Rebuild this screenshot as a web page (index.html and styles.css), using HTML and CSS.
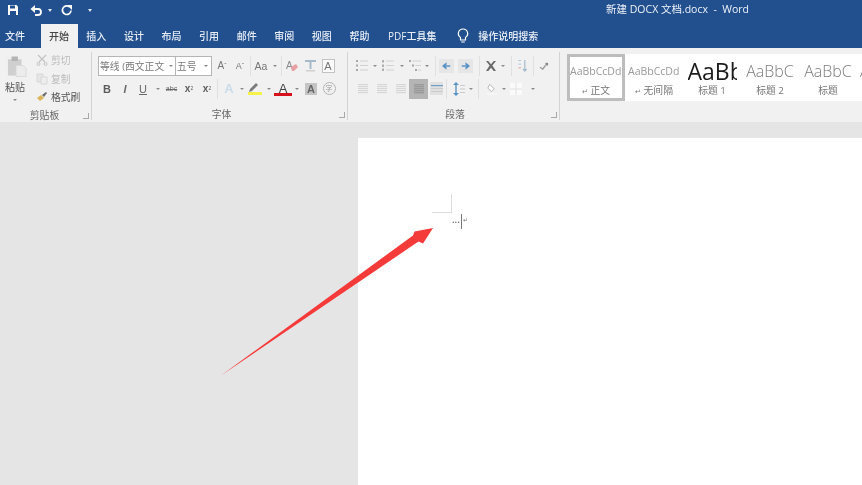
FILE: index.html
```html
<!DOCTYPE html>
<html>
<head>
  <meta charset="utf-8">
  <title>新建 DOCX 文档.docx - Word</title>
  <link rel="stylesheet" href="styles.css">
</head>
<body>
<div class="window">
  <div class="titlebar">
    <div class="qat">
      <svg class="qat-save" width="12" height="12" viewBox="0 0 12 12"><path fill="#fff" d="M1 1h8.500L11 2.500V11H1z"/><path fill="#22508f" d="M3 1.500h5v3H3zM3 7h6v4H3z"/></svg>
      <svg class="qat-undo" width="13" height="12" viewBox="0 0 13 12"><path fill="none" stroke="#fff" stroke-width="1.800" d="M3 5h5a3 3 0 0 1 0 6H5"/><path fill="#fff" d="M0.500 5L5 1v8z"/></svg>
      <span class="qat-caret"></span>
      <svg class="qat-redo" width="13" height="12" viewBox="0 0 13 12"><path fill="none" stroke="#fff" stroke-width="1.700" d="M9.800 3.200A4.300 4.300 0 1 0 11 6.500"/><path fill="#fff" d="M7 1h5v5z"/></svg>
      <span class="qat-caret qat-more"></span>
    </div>
    <div class="doc-title">新建 DOCX 文档.docx &nbsp;-&nbsp; Word</div>
  </div>

  <div class="tabs">
    <span class="tab tab-file">文件</span>
    <span class="tab tab-active">开始</span>
    <span class="tab">插入</span>
    <span class="tab">设计</span>
    <span class="tab">布局</span>
    <span class="tab">引用</span>
    <span class="tab">邮件</span>
    <span class="tab">审阅</span>
    <span class="tab">视图</span>
    <span class="tab">帮助</span>
    <span class="tab tab-pdf">PDF工具集</span>
    <svg class="bulb" width="12" height="16" viewBox="0 0 12 16"><path fill="none" stroke="#fff" stroke-width="1.200" d="M6 1a4.600 4.600 0 0 0-2.500 8.500V12h5V9.500A4.600 4.600 0 0 0 6 1zM4.200 14h3.600"/></svg>
    <span class="tab tab-search">操作说明搜索</span>
  </div>

  <div class="ribbon">
    <div class="group group-clip">
      <div class="clip-body">
        <div class="paste">
          <svg width="20" height="23" viewBox="0 0 22 24"><path fill="#cfcfcf" d="M1 4h15v18H1z"/><path fill="#b4b4b4" d="M5 1h7v5H5z"/><path fill="#ececec" stroke="#dadada" d="M10 11h8l3 3v9H10z"/></svg>
          <span class="paste-label">粘贴</span>
          <span class="caret"></span>
        </div>
        <div class="clip-list">
          <div class="clip-row muted">
            <svg width="12" height="12" viewBox="0 0 12 12"><path fill="none" stroke="#c2c2c2" stroke-width="1.200" d="M2 1l7 7M10 1L3 8"/><circle cx="2.500" cy="10" r="1.500" fill="none" stroke="#c2c2c2"/><circle cx="9.500" cy="10" r="1.500" fill="none" stroke="#c2c2c2"/></svg>
            <span>剪切</span>
          </div>
          <div class="clip-row muted">
            <svg width="12" height="12" viewBox="0 0 12 12"><path fill="#e6e6e6" stroke="#d8d8d8" d="M1 1h6v8H1z"/><path fill="#eeeeee" stroke="#d8d8d8" d="M5 4h6v7H5z"/></svg>
            <span>复制</span>
          </div>
          <div class="clip-row">
            <svg width="12" height="12" viewBox="0 0 12 12"><path fill="#dcb55a" d="M1 7l4-3 3 3-4 3z"/><path fill="#6c6c6c" d="M6 4l4-3 1 1-3 4z"/></svg>
            <span>格式刷</span>
          </div>
        </div>
      </div>
      <div class="group-foot"><span></span><span class="group-label">剪贴板</span><span class="launcher"></span></div>
    </div>

    <div class="group group-font">
      <div class="row">
        <span class="combo combo-font">等线 (西文正文<span class="caret"></span></span>
        <span class="combo combo-size">五号<span class="caret"></span></span>
        <span class="b18 glyph">A<sup>ˆ</sup></span>
        <span class="b18 glyph glyph-sm">A<sup>ˇ</sup></span>
        <span class="sep"></span>
        <span class="b18 glyph glyph-aa">Aa</span><span class="w10"><span class="caret"></span></span>
        <span class="sep"></span>
        <span class="b18"><svg width="14" height="14" viewBox="0 0 14 14"><text class="svg-a" x="1" y="10" fill="#888">A</text><path fill="#e8a0a4" d="M6 8l5-3 2 3-4 4H7z"/></svg></span>
        <span class="b18"><svg width="13" height="14" viewBox="0 0 13 14"><path fill="#a5bacb" d="M1 1h11v2H1zM5.500 3h2v7h-2z"/><path fill="#cfcfcf" d="M2 11h9v1.500H2z"/></svg></span>
        <span class="b18"><span class="boxed-a">A</span></span>
      </div>
      <div class="row">
        <span class="b18 fmt fmt-b">B</span>
        <span class="b18 fmt fmt-i">I</span>
        <span class="b18 fmt fmt-u">U</span>
        <span class="w11"><span class="caret"></span></span>
        <span class="w17 fmt-abc">abc</span>
        <span class="b18 fmt fmt-x">x<sub>2</sub></span>
        <span class="b18 fmt fmt-x">x<sup>2</sup></span>
        <span class="sep sep-wide"></span>
        <span class="b18 fx-a">A</span>
        <span class="w8"><span class="caret"></span></span>
        <span class="b18"><svg width="16" height="15" viewBox="0 0 16 15"><path fill="#7c7c7c" d="M3 8l6-6 2 2-6 6-3 1z"/><path fill="#f5f24a" d="M1 11h14v3H1z"/></svg></span>
        <span class="w10"><span class="caret"></span></span>
        <span class="b18 color-a">A</span>
        <span class="w10"><span class="caret"></span></span>
        <span class="b18"><span class="shade-a">A</span></span>
        <span class="b18"><span class="circle-a">字</span></span>
      </div>
      <div class="group-foot"><span></span><span class="group-label">字体</span><span class="launcher"></span></div>
    </div>

    <div class="group group-para">
      <div class="row">
        <span class="b18"><svg width="12" height="11" viewBox="0 0 12 11"><path fill="#a8a8a8" d="M0 0h2v2H0zM0 4.500h2v2H0zM0 9h2v2H0z"/><path fill="#d2d2d2" d="M4 .5h8v1H4zM4 5h8v1H4zM4 9.500h8v1H4z"/></svg></span>
        <span class="w8"><span class="caret"></span></span>
        <span class="b18"><svg width="12" height="11" viewBox="0 0 12 11"><path fill="#b0b0b0" d="M0 0h2v2.500H0zM0 4.500h2V7H0zM0 8.500h2V11H0z"/><path fill="#d2d2d2" d="M4 .5h8v1H4zM4 5h8v1H4zM4 9.500h8v1H4z"/></svg></span>
        <span class="w9"><span class="caret"></span></span>
        <span class="b18"><svg width="12" height="11" viewBox="0 0 12 11"><path fill="#a8a8a8" d="M0 0h2v2H0zM3 4.500h2v2H3zM6 9h2v2H6z"/><path fill="#d2d2d2" d="M3.500 .5H12v1H3.500zM6.500 5H12v1H6.500zM9 9.500h3v1H9z"/></svg></span>
        <span class="w6"><span class="caret"></span></span>
        <span class="sep sep-para1"></span>
        <span class="indent"><svg width="9" height="8" viewBox="0 0 12 10"><path fill="#5b93c6" d="M6 0v10L0 5z"/><path fill="#5b93c6" d="M6 4h5v2H6z"/></svg></span>
        <span class="indent"><svg width="9" height="8" viewBox="0 0 12 10"><path fill="#5b93c6" d="M6 0v10l6-5z"/><path fill="#5b93c6" d="M1 4h5v2H1z"/></svg></span>
        <span class="sep sep-para2"></span>
        <span class="w14"><svg width="12" height="10" viewBox="0 0 13 11"><path fill="#6a6a6a" d="M1 0h2.500l3 3.500L9.500 0H12L8 5l4 6H9.500l-3-3.500-3 3.500H1l4-6z"/></svg></span>
        <span class="w9"><span class="caret"></span></span>
        <span class="sep sep-para3"></span>
        <span class="w12"><svg width="11" height="14" viewBox="0 0 11 15"><path fill="#9dbcd6" d="M1 1h3v1H1zM1 5h3v1H1z"/><path fill="#d6a0a0" d="M1 9h3v1H1z"/><path fill="none" stroke="#a0b6c9" stroke-width="1.200" d="M8 1v12M6 10.500L8 13l2-2.500"/></svg></span>
        <span class="sep sep-para4"></span>
        <span class="w12"><svg width="11" height="9" viewBox="0 0 12 10"><path fill="none" stroke="#9a9a9a" stroke-width="1.500" d="M1 7l3 2 3-4"/><path fill="#8a8a8a" d="M7 2h3v3H7z"/></svg></span>
      </div>
      <div class="row">
        <span class="w18b"><span class="align"></span></span>
        <span class="w18b"><span class="align"></span></span>
        <span class="w18b"><span class="align"></span></span>
        <span class="align-on"><span class="align align-dark"></span></span>
        <span class="align-dist"><svg width="12" height="12" viewBox="0 0 12 12"><path fill="#6e9cc4" d="M0 2h12v1.200H0z"/><path fill="#cbcbcb" d="M0 5h12v1H0zM0 8h12v1H0z"/></svg></span>
        <span class="sep sep-para5"></span>
        <span class="w14"><svg width="12" height="14" viewBox="0 0 12 14"><path fill="#5b93c6" d="M3 0l3 3H0zM3 14l3-3H0zM2.300 3h1.400v8H2.300z"/><path fill="#cacaca" d="M7 3h5v1H7zM7 6.500h5v1H7zM7 10h5v1H7z"/></svg></span>
        <span class="w9"><span class="caret"></span></span>
        <span class="sep sep-para6"></span>
        <span class="w14"><svg width="12" height="13" viewBox="0 0 13 13"><path fill="#fff" stroke="#b0b0b0" d="M4 2l5 5-3 3-4-4z"/><path fill="#f6f6f6" d="M0 11h12v2H0z"/></svg></span>
        <span class="w10"><span class="caret"></span></span>
        <span class="w14"><svg width="12" height="12" viewBox="0 0 12 12"><path fill="#fafafa" d="M0 0h12v12H0z"/><path fill="none" stroke="#e2e2e2" d="M6 0v12M0 6h12"/></svg></span>
        <span class="w18b"><span class="caret"></span></span>
      </div>
      <div class="group-foot"><span></span><span class="group-label">段落</span><span class="launcher"></span></div>
    </div>

    <div class="gallery">
      <div class="style style-on"><span class="sample sample-sm">AaBbCcDd</span><span class="style-name"><i>↵</i> 正文</span></div>
      <div class="style"><span class="sample sample-sm">AaBbCcDd</span><span class="style-name"><i>↵</i> 无间隔</span></div>
      <div class="style"><span class="sample sample-h1">AaBb</span><span class="style-name">标题 1</span></div>
      <div class="style"><span class="sample sample-h2">AaBbC</span><span class="style-name">标题 2</span></div>
      <div class="style"><span class="sample sample-h2">AaBbC</span><span class="style-name">标题</span></div>
      <div class="style style-cut"><span class="sample sample-h2">AaBbC</span></div>
    </div>
  </div>

  <div class="workspace">
    <div class="page">
      <div class="crop-mark"></div>
      <div class="text-line">
        <span class="dots">···</span>
        <span class="cursor"></span>
        <span class="para-mark">↵</span>
      </div>
    </div>
  </div>

  <svg class="arrow" width="862" height="485" viewBox="0 0 862 485">
    <path fill="#f53a3a" d="M221 375.500L413 235.500 414.500 231.500 433 228 423 243.500 418.500 241.500z"/>
  </svg>
</div>
</body>
</html>
```

FILE: styles.css
```css
* {
  box-sizing: border-box;
}
html, body {
  margin: 0;
  padding: 0;
}
.window {
  position: relative;
  width: 862px;
  height: 485px;
  overflow: hidden;
  display: flex;
  flex-direction: column;
  background: #e5e5e5;
  color: #555;
  font-family: "Open Sans", "Noto Sans CJK SC", sans-serif;
  font-size: 10px;
  filter: blur(0.45px);
}

/* title bar */
.titlebar {
  height: 24px;
  flex: none;
  display: flex;
  background: #22508f;
  color: #fff;
}
.qat {
  width: 606px;
  display: flex;
  align-items: center;
  padding: 0 0 4px 7px;
}
.qat-undo {
  margin-left: 11px;
}
.qat-caret {
  width: 0;
  height: 0;
  margin-left: 5px;
  border: 2px solid transparent;
  border-top: 3px solid #dfe7f2;
  border-bottom: 0;
}
.qat-redo {
  margin-left: 8px;
}
.qat-more {
  margin-left: 15px;
}
.doc-title {
  padding-top: 2px;
  font-size: 10.500px;
  line-height: 14px;
  white-space: nowrap;
  color: #eef2f8;
}

/* tabs */
.tabs {
  height: 24px;
  flex: none;
  display: flex;
  align-items: stretch;
  background: #22508f;
  color: #e9eef6;
}
.tab {
  width: 37.600px;
  line-height: 25px;
  text-align: center;
  font-size: 10px;
  font-weight: 500;
}
.tab-file {
  width: 30px;
  margin-right: 10.500px;
}
.tab-active {
  width: 37px;
  background: #f1f1f1;
  color: #444;
}
.tab-pdf {
  width: 68px;
}
.bulb {
  margin: 4px 0 0 11px;
}
.tab-search {
  width: 70px;
  margin-left: 4px;
}

/* ribbon */
.ribbon {
  height: 74px;
  flex: none;
  display: flex;
  background: #f1f1f1;
}
.group {
  display: flex;
  flex-direction: column;
  padding-top: 6px;
  position: relative;
}
.group::after {
  content: "";
  position: absolute;
  right: 0;
  top: 4px;
  bottom: 2px;
  width: 1px;
  background: #d3d3d3;
}
.group-clip {
  width: 92px;
}
.group-font {
  width: 256px;
  padding-left: 6px;
}
.group-para {
  width: 212px;
  padding-left: 5px;
}
.group-foot {
  height: 14px;
  margin-top: 8px;
  padding-right: 3px;
  display: grid;
  grid-template-columns: 1fr auto 1fr;
  align-items: center;
}
.group-clip .group-foot {
  margin-top: 2px;
}
.group-label {
  font-size: 9.800px;
  line-height: 14px;
  color: #666;
}
.launcher {
  justify-self: end;
  width: 6px;
  height: 6px;
  border-left: 1px solid #a8a8a8;
  border-bottom: 1px solid #a8a8a8;
  transform: scaleX(-1);
}

.row {
  height: 24px;
  display: flex;
  align-items: center;
}
.row > span {
  flex: none;
  display: flex;
  align-items: center;
  justify-content: center;
  height: 20px;
}
.b18 { width: 18px; }
.w6 { width: 6px; }
.w8 { width: 8px; }
.w9 { width: 9px; }
.w10 { width: 10px; }
.w11 { width: 11px; }
.w12 { width: 12px; }
.w14 { width: 14px; }
.w17 { width: 17px; }
.row > .w18b { width: 19px; }

.caret {
  display: inline-block;
  width: 0;
  height: 0;
  border: 2px solid transparent;
  border-top: 2.500px solid #8a8a8a;
  border-bottom: 0;
}
.row > .sep {
  width: 1px;
  height: 20px;
  margin: 0 1px;
  background: #e0e0e0;
}
.row > .sep-wide { margin: 0 2px 0 1px; }
.row > .sep-para1 { margin: 0 3px 0 5px; }
.row > .sep-para2 { margin: 0 4px 0 2px; }
.row > .sep-para3 { margin: 0 4px 0 4px; }
.row > .sep-para4 { margin: 0 4px 0 5px; }
.row > .sep-para5 { margin: 0 5px 0 3px; }
.row > .sep-para6 { margin: 0 6px 0 3px; }

/* clipboard */
.clip-body {
  height: 54px;
  display: flex;
}
.paste {
  width: 30px;
  margin-right: 6px;
  padding-top: 1px;
  display: flex;
  flex-direction: column;
  align-items: center;
}
.paste svg {
  margin-left: 4px;
}
.paste-label {
  margin-top: 2px;
  font-size: 10px;
  line-height: 14px;
  color: #555;
}
.paste .caret {
  margin-top: 5px;
}
.clip-list {
  margin-top: -3px;
}
.clip-row {
  height: 18.500px;
  display: flex;
  align-items: center;
  gap: 3px;
  font-size: 9.800px;
  color: #555;
}
.clip-row svg {
  flex: none;
}
.clip-row.muted {
  color: #bcbcbc;
}

/* font */
.combo {
  background: #fff;
  border: 1px solid #b5b5b5;
  font-size: 9.800px;
  color: #7a7a7a;
  white-space: nowrap;
  overflow: hidden;
}
.row > .combo-font {
  width: 78px;
  justify-content: space-between;
  padding: 0 2px 0 1px;
}
.row > .combo-size {
  width: 37px;
  margin-left: -1px;
  margin-right: 1px;
  justify-content: space-between;
  padding: 0 3px 0 1px;
}
.combo .caret {
  flex: none;
}
.glyph {
  font-family: "Liberation Sans", sans-serif;
  font-size: 10px;
  color: #777;
  align-items: flex-start;
}
.glyph-sm {
  font-size: 9px;
}
.glyph sup {
  font-size: 7px;
  line-height: 8px;
  vertical-align: top;
}
.glyph-aa {
  font-size: 10.500px;
}
.boxed-a {
  width: 13px;
  height: 14px;
  border: 1px solid #c2c2c2;
  background: #fafafa;
  font-family: "Liberation Sans", sans-serif;
  font-size: 11px;
  line-height: 12px;
  text-align: center;
  color: #777;
}
.svg-a {
  font-family: "Liberation Sans", sans-serif;
  font-size: 10px;
}
.fmt {
  font-family: "Liberation Sans", sans-serif;
  font-size: 11px;
  color: #5c5c5c;
}
.fmt-b {
  font-weight: bold;
}
.fmt-i {
  font-style: italic;
  font-weight: bold;
  color: #6a6a6a;
}
.fmt-u {
  text-decoration: underline;
  color: #6a6a6a;
}
.fmt-x {
  font-weight: bold;
  font-size: 10px;
}
.fmt-x sub, .fmt-x sup {
  font-size: 5px;
  font-weight: normal;
  line-height: 5px;
}
.fmt-abc {
  font-family: "Liberation Sans", sans-serif;
  font-size: 7px;
  text-decoration: line-through;
  color: #6a6a6a;
}
.fx-a {
  font-family: "Liberation Sans", sans-serif;
  font-size: 13px;
  font-weight: bold;
  color: #c9dbea;
}
.color-a {
  font-family: "Liberation Sans", sans-serif;
  font-size: 13px;
  color: #444;
  line-height: 12px;
  box-shadow: inset 0 -3px 0 #f1f1f1, inset 0 -6px 0 #d8121c;
}
.shade-a {
  width: 12px;
  height: 12px;
  background: #c4c4c4;
  font-family: "Liberation Sans", sans-serif;
  font-size: 11px;
  font-weight: bold;
  line-height: 12px;
  text-align: center;
  color: #666;
}
.circle-a {
  width: 13px;
  height: 13px;
  border: 1px solid #b5b5b5;
  border-radius: 50%;
  font-size: 7px;
  line-height: 11px;
  text-align: center;
  color: #999;
}

/* paragraph */
.row > .indent {
  width: 15px;
  height: 14px;
  margin-right: 4px;
  background: #e6e6e6;
}
.align {
  display: block;
  width: 10px;
  height: 10px;
  background: repeating-linear-gradient(#d6d6d6 0 1px, #ededed 1px 2px);
}
.align-dark {
  background: repeating-linear-gradient(#9a9a9a 0 1px, #a8a8a8 1px 2px);
}
.row > .align-on {
  width: 19px;
  height: 20px;
  margin-left: -1px;
  margin-right: 2px;
  background: #b4b4b4;
}
.row > .align-dist {
  width: 13px;
  height: 13px;
  background: #e0e0e0;
}

/* styles gallery */
.gallery {
  flex: 1;
  margin: 6px 0 21px 7px;
  display: flex;
  overflow: hidden;
  background: #fff;
}
.style {
  flex: none;
  width: 58px;
  height: 47px;
  padding-top: 6px;
  display: flex;
  flex-direction: column;
  align-items: center;
  overflow: hidden;
  white-space: nowrap;
}
.style-on {
  border: 3px solid #bdbdbd;
  padding-top: 3px;
}
.style-cut {
  align-items: flex-start;
  padding-left: 3px;
}
.sample {
  height: 24px;
  margin-top: -1px;
  margin-bottom: 1px;
  display: block;
  font-family: "Open Sans", sans-serif;
  font-weight: 300;
  color: #7c7c7c;
}
.sample-sm {
  font-size: 10.500px;
  font-weight: 400;
  color: #999;
  line-height: 24px;
  width: 52px;
  overflow: hidden;
  text-align: left;
}
.sample-h1 {
  font-size: 23px;
  font-weight: 400;
  line-height: 24px;
  width: 49px;
  overflow: hidden;
  color: #1c1c1c;
  text-align: left;
}
.sample-h2 {
  font-size: 16px;
  line-height: 24px;
}
.style-name {
  font-size: 9.800px;
  line-height: 13px;
  color: #777;
}
.style-name i {
  font-style: normal;
  font-size: 7px;
}

/* document */
.workspace {
  flex: 1;
  padding: 16px 0 0 358px;
  display: flex;
  background: #e5e5e5;
}
.page {
  flex: 1;
  background: #fff;
  padding: 56px 0 0 74px;
}
.crop-mark {
  width: 20px;
  height: 19px;
  border-right: 1px solid #dcdcdc;
  border-bottom: 1px solid #dcdcdc;
}
.text-line {
  height: 15px;
  margin-top: 1px;
  padding-left: 20px;
  display: flex;
  align-items: center;
  color: #777;
}
.dots {
  width: 9px;
  font-size: 9px;
  font-weight: bold;
  line-height: 15px;
  white-space: nowrap;
  overflow: hidden;
}
.cursor {
  width: 1px;
  height: 15px;
  background: #777;
}
.para-mark {
  margin-left: 1px;
  margin-bottom: 3px;
  font-family: "DejaVu Sans", sans-serif;
  font-size: 6px;
  line-height: 6px;
}

/* annotation drawn over the screenshot */
.arrow {
  position: absolute;
  left: 0;
  top: 0;
}
```
